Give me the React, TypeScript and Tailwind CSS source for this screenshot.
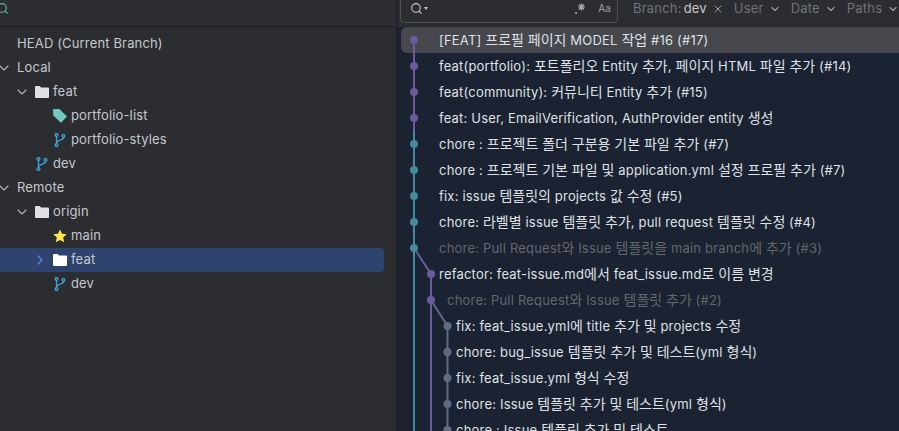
import { ChevronDown, ChevronRight, Search, X } from "lucide-react";

const FONT = "font-['Inter','Noto_Sans_CJK_KR',sans-serif]";

type Commit = { text: string; indent: string; muted?: boolean };

const commits: Commit[] = [
  { text: "[FEAT] 프로필 페이지 MODEL 작업 #16 (#17)", indent: "pl-[38px]" },
  { text: "feat(portfolio): 포트폴리오 Entity 추가, 페이지 HTML 파일 추가 (#14)", indent: "pl-[38px]" },
  { text: "feat(community): 커뮤니티 Entity 추가 (#15)", indent: "pl-[38px]" },
  { text: "feat: User, EmailVerification, AuthProvider entity 생성", indent: "pl-[38px]" },
  { text: "chore : 프로젝트 폴더 구분용 기본 파일 추가 (#7)", indent: "pl-[38px]" },
  { text: "chore : 프로젝트 기본 파일 및 application.yml 설정 프로필 추가 (#7)", indent: "pl-[38px]" },
  { text: "fix: issue 템플릿의 projects 값 수정 (#5)", indent: "pl-[38px]" },
  { text: "chore: 라벨별 issue 템플릿 추가, pull request 템플릿 수정 (#4)", indent: "pl-[38px]" },
  { text: "chore: Pull Request와 Issue 템플릿을 main branch에 추가 (#3)", indent: "pl-[38px]", muted: true },
  { text: "refactor: feat-issue.md에서 feat_issue.md로 이름 변경", indent: "pl-[38px]" },
  { text: "chore: Pull Request와 Issue 템플릿 추가 (#2)", indent: "pl-[46px]", muted: true },
  { text: "fix: feat_issue.yml에 title 추가 및 projects 수정", indent: "pl-[55px]" },
  { text: "chore: bug_issue 템플릿 추가 및 테스트(yml 형식)", indent: "pl-[55px]" },
  { text: "fix: feat_issue.yml 형식 수정", indent: "pl-[55px]" },
  { text: "chore: Issue 템플릿 추가 및 테스트(yml 형식)", indent: "pl-[55px]" },
  { text: "chore : Issue 템플릿 추가 및 테스트", indent: "pl-[55px]" },
];

// hangul runs sit a bit wider in the original font
function CommitText({ text }: { text: string }) {
  return (
    <span>
      {text.split(/([가-힣]+)/).map((part, i) =>
        i % 2 === 1 ? (
          <span key={i} className="text-[14px] tracking-normal">
            {part}
          </span>
        ) : (
          part
        ),
      )}
    </span>
  );
}

function Folder({ white }: { white?: boolean }) {
  return (
    <svg width="14" height="14" viewBox="0 0 14 14" className="shrink-0">
      <path
        d="M0 2a1 1 0 0 1 1-1h3.6l1.6 1.6H13a1 1 0 0 1 1 1v8.4a1 1 0 0 1-1 1H1a1 1 0 0 1-1-1z"
        fill={white ? "#ffffff" : "#dfe1e5"}
      />
    </svg>
  );
}

function Branch() {
  return (
    <svg width="14" height="14" viewBox="0 0 14 14" fill="none" stroke="#3fa8e0" strokeWidth="1.3" className="shrink-0">
      <circle cx="3.5" cy="2" r="1.4" />
      <circle cx="3.5" cy="12" r="1.4" />
      <circle cx="10.5" cy="3" r="1.4" />
      <path d="M3.5 3.4v7.2M10.5 4.4c0 3-7 3-7 5.4" />
    </svg>
  );
}

function Tag() {
  return (
    <svg width="14" height="14" viewBox="0 0 14 14" className="shrink-0">
      <path d="M0 1a1 1 0 0 1 1-1h5.4L14 7.6 8 13.8.3 6.6z" fill="#73c9bd" />
    </svg>
  );
}

function Star() {
  return (
    <svg width="14" height="14" viewBox="0 0 14 14" className="shrink-0">
      <path d="M7 0.4l2 4.4 4.8.5-3.6 3.2 1 4.8L7 10.9l-4.2 2.4 1-4.8L.2 5.3 5 4.8z" fill="#fde74c" />
    </svg>
  );
}

// regex toggle in the search box
function Burst() {
  return (
    <svg width="11" height="11" viewBox="0 0 11 11" stroke="#a8abb0" strokeWidth="1.2" className="shrink-0">
      <path d="M6.5 0.5v7M3 4h7M4 1.5l5 5M9 1.5l-5 5" />
      <circle cx="1" cy="10" r="1" fill="#a8abb0" stroke="none" />
    </svg>
  );
}

function Row({
  indent,
  arrow,
  icon,
  label,
  selected,
}: {
  indent: string;
  arrow?: "down" | "right";
  icon?: React.ReactNode;
  label: string;
  selected?: boolean;
}) {
  return (
    <div className={`flex h-6 items-center ${indent} ${selected ? "mr-[12px] rounded-r-[4px] bg-[#2e436e]" : ""}`}>
      <span className="flex w-[17px] shrink-0 items-center">
        {arrow === "down" && <ChevronDown size={16} strokeWidth={1.6} className="-ml-[4px] text-[#b4b8bf]" />}
        {arrow === "right" && <ChevronRight size={16} strokeWidth={1.8} className="-ml-[4px] text-[#548af7]" />}
      </span>
      {icon && <span className="mr-[4px] flex w-[14px] shrink-0 items-center">{icon}</span>}
      <span className="text-[13px] tracking-[0.15px] whitespace-nowrap text-[#c5c8ce]">{label}</span>
    </div>
  );
}

function Filter({ label }: { label: string }) {
  return (
    <span className="flex items-center gap-[5px] text-[13px] tracking-[0.2px] text-[#6f737a]">
      {label}
      <ChevronDown size={12} strokeWidth={2.4} className="text-[#9a9da3]" />
    </span>
  );
}

function Graph() {
  const y = (i: number) => 13 + i * 26;
  const teal = "#458a9c";
  const purple = "#6c5a9e";
  const slate = "#626a85";
  return (
    <svg width="60" height="404" className="pointer-events-none absolute top-0 left-0">
      <line x1="17" y1={y(0)} x2="17" y2="104" stroke={purple} strokeWidth="2" />
      <line x1="17" y1="104" x2="17" y2="404" stroke={teal} strokeWidth="2" />
      <line x1="17" y1={y(8)} x2="34" y2={y(9)} stroke={purple} strokeWidth="2" />
      <line x1="34" y1={y(9)} x2="34" y2="404" stroke={purple} strokeWidth="2" />
      <line x1="34" y1={y(10)} x2="50.5" y2={y(11)} stroke={slate} strokeWidth="2" />
      <line x1="50.5" y1={y(11)} x2="50.5" y2="404" stroke={slate} strokeWidth="2" />
      {[0, 1, 2, 3].map((i) => (
        <circle key={i} cx="17" cy={y(i)} r="4" fill={purple} />
      ))}
      {[4, 5, 6, 7, 8].map((i) => (
        <circle key={i} cx="17" cy={y(i)} r="4" fill={teal} />
      ))}
      <circle cx="34" cy={y(9)} r="4" fill={purple} />
      <circle cx="34" cy={y(10)} r="4" fill={purple} />
      {[11, 12, 13, 14, 15].map((i) => (
        <circle key={i} cx="50.5" cy={y(i)} r="4" fill={slate} />
      ))}
    </svg>
  );
}

export default function App() {
  return (
    <div className={`flex h-[431px] w-[899px] overflow-hidden bg-[#2b2d30] ${FONT}`}>
      {/* branches tree */}
      <div className="flex w-[397px] shrink-0 flex-col border-r border-[#1e1f22]">
        <div className="flex h-[27px] shrink-0 items-start border-b border-[#1e1f22] pt-[2px]">
          <Search size={13} strokeWidth={2} className="-ml-[4px] text-[#5fb8a8]" />
        </div>
        <div className="pt-[5px]">
          <Row indent="pl-0" label="HEAD (Current Branch)" />
          <Row indent="pl-0" arrow="down" label="Local" />
          <Row indent="pl-[18px]" arrow="down" icon={<Folder />} label="feat" />
          <Row indent="pl-[36px]" icon={<Tag />} label="portfolio-list" />
          <Row indent="pl-[36px]" icon={<Branch />} label="portfolio-styles" />
          <Row indent="pl-[18px]" icon={<Branch />} label="dev" />
          <Row indent="pl-0" arrow="down" label="Remote" />
          <Row indent="pl-[18px]" arrow="down" icon={<Folder />} label="origin" />
          <Row indent="pl-[36px]" icon={<Star />} label="main" />
          <Row indent="pl-[36px]" arrow="right" icon={<Folder white />} label="feat" selected />
          <Row indent="pl-[36px]" icon={<Branch />} label="dev" />
        </div>
      </div>

      {/* log */}
      <div className="flex min-w-0 flex-1 flex-col bg-[#1b2232]">
        <div className="flex h-[27px] shrink-0 items-start bg-[#2b2d30]">
          <div className="-mt-px ml-[3px] flex h-[24px] w-[218px] shrink-0 items-center rounded-b-[4px] border border-[#4e5157] pr-[6px] pb-[5px] pl-[9px]">
            <Search size={13} strokeWidth={2} className="text-[#c5c8ce]" />
            <span className="ml-[1px] h-0 w-0 border-x-[2.5px] border-t-[3px] border-x-transparent border-t-[#c5c8ce]" />
            <span className="ml-auto">
              <Burst />
            </span>
            <span className="ml-[12px] text-[10px] font-medium text-[#8f9297]">Aa</span>
          </div>
          <div className="ml-[15px] flex h-[17px] shrink-0 items-center gap-[10px]">
            <span className="flex items-center text-[13px] tracking-[0.2px] text-[#6f737a]">
              Branch:<span className="ml-[2px] text-[#c5c8ce]">dev</span>
              <X size={12} strokeWidth={2} className="ml-[5px] text-[#9a9da3]" />
            </span>
            <Filter label="User" />
            <Filter label="Date" />
            <Filter label="Paths" />
          </div>
        </div>
        <div className="relative">
          <Graph />
          <div className="pl-[4px]">
            {commits.map((c, i) => (
              <div
                key={c.text}
                className={`flex h-[26px] items-center text-[13px] tracking-[0.2px] whitespace-pre ${c.indent} ${
                  i === 0 ? "rounded-l-[6px] bg-[#46484d]" : ""
                } ${c.muted ? "text-[#64676d]" : "text-[#dfe1e5]"}`}
              >
                <CommitText text={c.text} />
              </div>
            ))}
          </div>
        </div>
      </div>
    </div>
  );
}
